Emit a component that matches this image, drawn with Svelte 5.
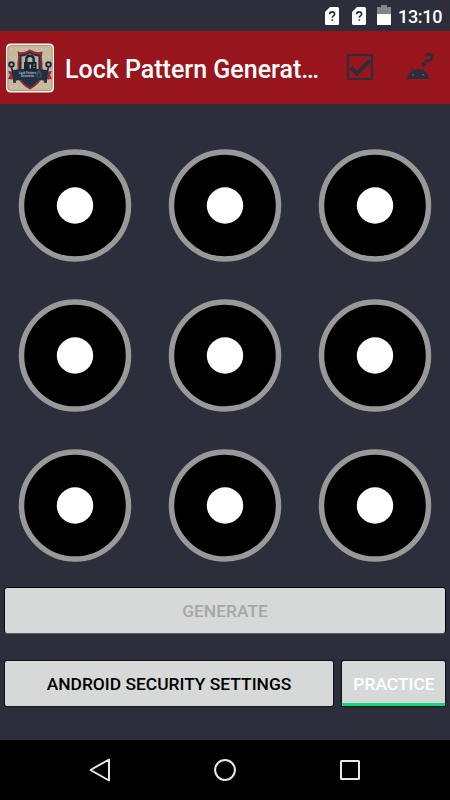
<!--
  Lock pattern screen: status bar, action bar, 3x3 dot grid, buttons and nav bar.
-->
<script lang="ts">
  let time = '13:10';
  let title = 'Lock Pattern Generat…';

  const dots = Array.from({ length: 9 }, (_, i) => i);
  const sims = [0, 1];
</script>

<div class="screen">
  <div class="status">
    {#each sims as sim (sim)}
      <svg class="sim" width="14" height="18" viewBox="0 0 14 18">
        <path d="M5 0H12.5Q14 0 14 1.5V16.5Q14 18 12.5 18H1.5Q0 18 0 16.5V5Z" fill="#fff" />
        <path d="M4.700 7.300Q4.700 4.900 7.200 4.900Q9.600 4.900 9.600 7Q9.600 8.200 8.200 9.100Q7.300 9.700 7.300 10.800M7.300 12.200V13.800" fill="none" stroke="#2c2e3b" stroke-width="1.700" />
      </svg>
    {/each}
    <svg class="battery" width="14" height="20" viewBox="0 0 14 20">
      <path d="M0 2H4V0H10V2H14V9H0Z" fill="#85868d" />
      <path d="M0 9H14V20H0Z" fill="#fff" />
    </svg>
    <span class="time">{time}</span>
  </div>

  <header>
    <svg class="logo" width="48" height="50" viewBox="0 0 48 50">
      <rect y="0.500" width="48" height="49" rx="4.500" fill="#fbf8f4" />
      <rect x="1.700" y="2.500" width="44.600" height="45" rx="3.500" fill="#c7b99c" stroke="#a5605a" stroke-width=".6" />
      <path d="M5 6H43M4 14H12M37 14H44M5 44H43" stroke="#e2d8c1" stroke-width="1" stroke-dasharray="1 4" />
      <!-- ribbon tails -->
      <path d="M2 28L11 29V37L2 36L4 32ZM46 28L37 29V37L46 36L44 32Z" fill="#9a2831" />
      <!-- keys -->
      <g fill="none" stroke="#1c2b40" stroke-width="2">
        <circle cx="5.500" cy="21.500" r="2.300" />
        <circle cx="42.500" cy="21.500" r="2.300" />
        <path d="M5.500 24L9 39M7 39H10M42.500 24L39 39M38 39H41" stroke-width="1.700" />
      </g>
      <path d="M24 6.500Q18 10.500 11.500 8.500Q13 14 11.500 20V34Q15 42 24 46.500Q33 42 36.500 34V20Q35 14 36.500 8.500Q30 10.500 24 6.500Z" fill="#9a2831" />
      <path d="M24 8.800Q19 12.200 13.500 11.200Q14.500 15 13.300 20V34Q17 40.500 24 44.500Q31 40.500 34.700 34V20Q33.500 15 34.500 11.200Q29 12.200 24 8.800Z" fill="#203047" />
      <path d="M24 10.500Q20 13 15.500 13.500V28H32.500V13.500Q28 13 24 10.500Z" fill="#bcae94" />
      <path d="M7 27Q24 24 41 27V38.500Q33 35 24 39.500Q15 35 7 38.500Z" fill="#203047" />
      <path d="M20.300 20V16.500Q20.300 12.800 24 12.800Q27.700 12.800 27.700 16.500V20" fill="none" stroke="#172539" stroke-width="2.400" />
      <rect x="18" y="19" width="12.500" height="9" fill="#172539" />
      <path d="M24.300 21.500V25.500" stroke="#b9ad96" stroke-width="1.500" />
      <path d="M27 22H29M27 24.500H29" stroke="#7c7b76" stroke-width="1" />
      <text x="21.500" y="31" class="tiny">Lock Pattern</text>
      <text x="21.500" y="34.300" class="tiny">Generator</text>
      <path d="M31 30H35V34H31ZM32 30V28H34V30" fill="none" stroke="#536174" stroke-width=".8" />
    </svg>
    <h1>{title}</h1>
    <svg class="check" width="26" height="26" viewBox="0 0 26 26">
      <rect x="1" y="1" width="24" height="24" fill="none" stroke="#2c2e3b" stroke-width="2.200" />
      <path d="M4 13.500L10 19.500L22.500 7" fill="none" stroke="#2c2e3b" stroke-width="4" />
    </svg>
    <svg class="droid" width="28" height="28" viewBox="0 0 28 28">
      <path d="M1 27Q1.500 20.500 7 18.500L5 15.500L5.700 15L8 18Q12 16.700 16 18L18.300 15L19 15.500L17 18.500Q22.500 20.500 23 27Z" fill="#2c2e3b" />
      <circle cx="7" cy="22.700" r=".8" fill="#b06068" />
      <circle cx="17" cy="22.700" r=".8" fill="#b06068" />
      <path d="M19.500 3.800Q20.300 1.800 23 2.200Q26.600 2.900 26 5.700Q25.400 8.500 22 8.400Q19.800 8.300 19.200 10.300" fill="none" stroke="#2c2e3b" stroke-width="3" />
      <circle cx="17.500" cy="12.600" r="2" fill="#2c2e3b" />
    </svg>
  </header>

  <main>
    <div class="grid">
      {#each dots as dot (dot)}
        <svg width="114" height="114" viewBox="0 0 114 114">
          <circle cx="57" cy="56.500" r="53.500" fill="#000" stroke="#999" stroke-width="5.500" />
          <circle cx="57" cy="56.500" r="18.200" fill="#fff" />
        </svg>
      {/each}
    </div>

    <button class="generate" disabled>GENERATE</button>
    <div class="row">
      <button class="settings">ANDROID SECURITY SETTINGS</button>
      <button class="practice">PRACTICE</button>
    </div>
  </main>

  <nav>
    <svg width="22" height="26" viewBox="0 0 22 26">
      <path d="M20 2.500V23.500L1.500 13Z" fill="none" stroke="#e8e8e8" stroke-width="2" stroke-linejoin="round" />
    </svg>
    <svg class="home" width="22" height="22" viewBox="0 0 22 22">
      <circle cx="11" cy="11" r="9.900" fill="none" stroke="#e8e8e8" stroke-width="2" />
    </svg>
    <svg width="20" height="20" viewBox="0 0 20 20">
      <rect x="1" y="1" width="18" height="18" rx=".5" fill="none" stroke="#e8e8e8" stroke-width="2" />
    </svg>
  </nav>
</div>

<style>
  :global(body) { margin: 0; background: #2c2e3b; }
  .screen { width: 450px; height: 800px; display: flex; flex-direction: column; overflow: hidden; background: #2c2e3b; font-family: Roboto, sans-serif; }

  .status { flex: none; height: 31px; box-sizing: border-box; display: flex; align-items: flex-start; justify-content: flex-end; padding-right: 8px; }
  .sim { margin: 7px 13px 0 0; }
  .sim:nth-child(2) { margin-right: 11px; }
  .battery { margin: 5px 7px 0 0; }
  .time { width: 44px; color: #fff; font-size: 18px; font-weight: 500; line-height: 34px; letter-spacing: -0.3px; }

  header { flex: none; height: 73px; box-sizing: border-box; display: flex; align-items: center; padding: 0 16px 0 6px; background: #99151e; }
  .logo { flex: none; }
  .tiny { fill: #a4abb3; font-size: 3px; font-weight: 700; text-anchor: middle; }
  h1 { flex: none; width: 262px; margin: 4px 0 0 11px; color: #fff; font-size: 25px; font-weight: 500; line-height: 32px; white-space: nowrap; }
  .check { margin: 0 0 1px 20px; flex: none; }
  .droid { margin: 0 0 3px 33px; flex: none; }

  main { flex: 1; padding: 45px 5px 0; }
  .grid { display: grid; grid-template-columns: repeat(3, 114px); gap: 36px; padding-left: 13px; }
  .grid svg { display: block; }

  button { height: 45px; box-sizing: border-box; padding: 1px 0 0; border: 0; border-radius: 2px; background: #d6d9d7; color: #000; font-family: inherit; font-size: 17.4px; font-weight: 500; white-space: nowrap; box-shadow: 0 0 1px 1px #11121a; }
  .generate { display: block; width: 100%; margin-top: 25px; color: #a6a8a7; box-shadow: 0 -1px 0 #000, 1px 0 0 #000, -1px 0 0 #0a0a12, 0 1px 0 #555761; }
  .row { display: flex; gap: 9px; margin-top: 28px; }
  .settings { flex: 1; }
  .practice { width: 103px; color: #fff; border-bottom: 3px solid #10d67d; padding: 4px 0 0 1px; border-radius: 2px 2px 0 0; }

  nav { flex: none; height: 60px; display: flex; align-items: center; justify-content: space-between; padding: 0 90px 0 89px; background: #000; }
  .home { margin-right: 1px; }
</style>
